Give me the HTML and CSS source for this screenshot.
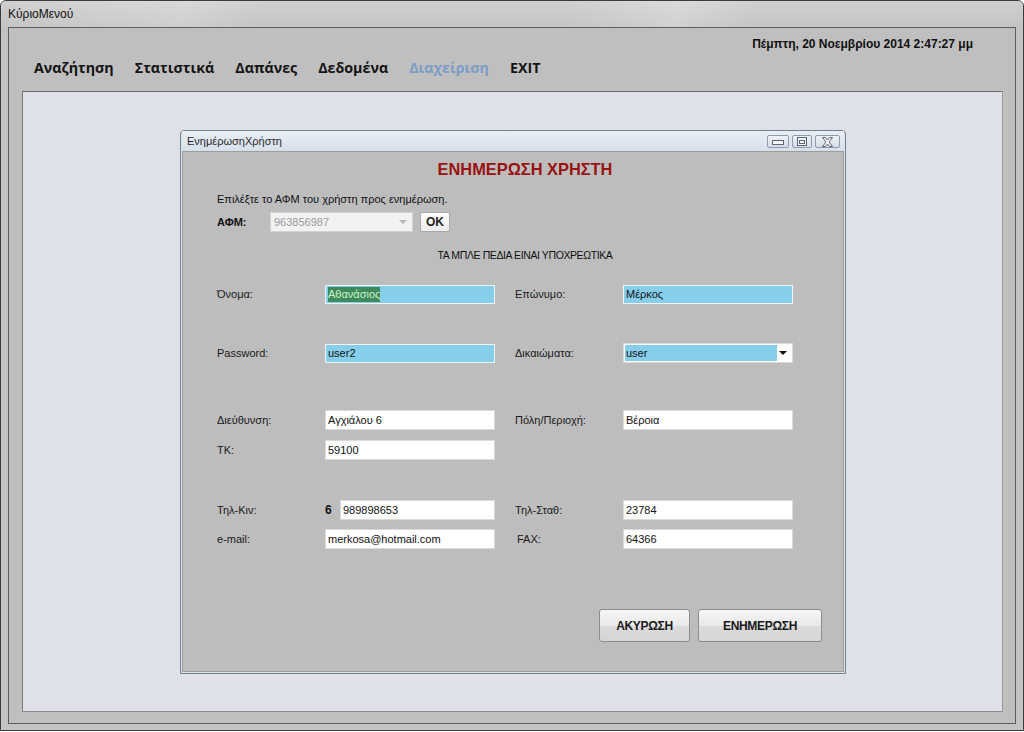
FILE: index.html
```html
<!DOCTYPE html>
<html lang="el">
<head>
<meta charset="utf-8">
<title>ΚύριοΜενού</title>
<link rel="stylesheet" href="styles.css">
</head>
<body>
<div class="window">
  <div class="titlebar"><span class="wtitle">ΚύριοΜενού</span></div>
  <div class="client">
    <div class="datebar"><span class="date">Πέμπτη, 20 Νοεμβρίου 2014 2:47:27 μμ</span></div>
    <nav class="menu">
      <span class="mi">Αναζήτηση</span>
      <span class="mi">Στατιστικά</span>
      <span class="mi">Δαπάνες</span>
      <span class="mi">Δεδομένα</span>
      <span class="mi mi-active">Διαχείριση</span>
      <span class="mi">EXIT</span>
    </nav>
    <div class="mdi">
      <div class="dialog">
        <div class="dlg-title">
          <span class="dlg-caption">ΕνημέρωσηΧρήστη</span>
          <div class="ctrls">
            <span class="cb cb-min"><svg width="12" height="7" viewBox="0 0 12 7"><rect x="0.5" y="2.5" width="11" height="4" fill="#f4f6f9" stroke="#5c6672"/></svg></span>
            <span class="cb cb-max"><svg width="10" height="9" viewBox="0 0 10 9"><rect x="0.5" y="0.5" width="9" height="8" fill="#f4f6f9" stroke="#5c6672"/><rect x="2.5" y="3.5" width="5" height="3" fill="none" stroke="#5c6672"/></svg></span>
            <span class="cb cb-close"><svg width="13" height="10" viewBox="0 0 13 10"><path d="M1.5 0.5 L4.5 0.5 L6.5 3 L8.5 0.5 L11.5 0.5 L8 5 L11.5 9.5 L8.5 9.5 L6.5 7 L4.5 9.5 L1.5 9.5 L5 5 Z" fill="#f4f6f9" stroke="#5c6672" stroke-width="1"/></svg></span>
          </div>
        </div>
        <div class="dlg-body">
          <h1 class="heading">ΕΝΗΜΕΡΩΣΗ ΧΡΗΣΤΗ</h1>
          <p class="hint">Επιλέξτε το ΑΦΜ του χρήστη προς ενημέρωση.</p>
          <div class="afm-row">
            <span class="afm-label">ΑΦΜ:</span>
            <div class="combo combo-disabled"><span>963856987</span><span class="arrow-gray"></span></div>
            <span class="btn-ok">OK</span>
          </div>
          <p class="note">ΤΑ ΜΠΛΕ ΠΕΔΙΑ ΕΙΝΑΙ ΥΠΟΧΡΕΩΤΙΚΑ</p>

          <div class="group group-req">
            <span class="lbl">Όνομα:</span>
            <div class="field req"><span class="sel">Αθανάσιος</span></div>
            <span class="lbl">Επώνυμο:</span>
            <div class="field req">Μέρκος</div>

            <span class="lbl">Password:</span>
            <div class="field req">user2</div>
            <span class="lbl">Δικαιώματα:</span>
            <div class="field combo-rights"><span class="rights-val">user</span><span class="arrow-black"></span></div>
          </div>

          <div class="group group-addr">
            <span class="lbl">Διεύθυνση:</span>
            <div class="field">Αγχιάλου 6</div>
            <span class="lbl">Πόλη/Περιοχή:</span>
            <div class="field">Βέροια</div>

            <span class="lbl">ΤΚ:</span>
            <div class="field">59100</div>
          </div>

          <div class="group group-phone">
            <span class="lbl">Τηλ-Κιν:</span>
            <div class="phone"><b class="prefix">6</b><div class="field field-phone">989898653</div></div>
            <span class="lbl">Τηλ-Σταθ:</span>
            <div class="field">23784</div>

            <span class="lbl">e-mail:</span>
            <div class="field">merkosa@hotmail.com</div>
            <span class="lbl lbl-fax">FAX:</span>
            <div class="field">64366</div>
          </div>

          <div class="actions">
            <span class="btn btn-cancel">ΑΚΥΡΩΣΗ</span>
            <span class="btn btn-update">ΕΝΗΜΕΡΩΣΗ</span>
          </div>
        </div>
      </div>
    </div>
  </div>
</div>
</body>
</html>
```

FILE: styles.css
```css
* { box-sizing: border-box; }

html, body {
  margin: 0;
  padding: 0;
  background: #ffffff;
  font-family: "Liberation Sans", Arial, sans-serif;
  font-size: 11px;
  color: #000;
}

.window {
  width: 1024px;
  height: 731px;
  border: 1px solid #3c3c3c;
  border-radius: 6px 6px 0 0;
  background: #c3c3c3;
  display: flex;
  flex-direction: column;
  overflow: hidden;
}

.titlebar {
  height: 26px;
  flex: none;
  padding: 6px 0 0 7px;
  background:
    linear-gradient(100deg, rgba(255,255,255,0) 0%, rgba(255,255,255,0.18) 18%, rgba(255,255,255,0) 26%, rgba(255,255,255,0) 55%, rgba(255,255,255,0.22) 66%, rgba(255,255,255,0) 74%),
    linear-gradient(#d0d0d0, #c4c4c4);
}

.wtitle {
  font-family: "Liberation Sans", Arial, sans-serif;
  font-size: 12px;
  color: #111;
}

.client {
  flex: 1;
  margin: 0 7px 6px 7px;
  border: 1px solid #5e5e5e;
  background: #bfbfbf;
  display: flex;
  flex-direction: column;
  padding: 0 12px 11px 13px;
}

.datebar {
  margin-top: 9px;
  height: 14px;
  display: flex;
  justify-content: flex-end;
  padding-right: 30px;
}

.date {
  font-weight: bold;
  font-size: 12px;
  line-height: 14px;
  color: #111;
}

.menu {
  margin-top: 7px;
  height: 20px;
  display: flex;
  gap: 21px;
  padding-left: 12px;
}

.mi {
  font-family: "Open Sans", "DejaVu Sans", sans-serif;
  font-weight: bold;
  font-size: 14.25px;
  line-height: 20px;
  color: #141414;
}

.mi-active {
  color: #7c9cc6;
}

.mdi {
  margin-top: 13px;
  flex: 1;
  background: #dee1e8;
  border-top: 1px solid #6e6e6e;
  border-left: 1px solid #7a7a7a;
  border-right: 1px solid #9a9a9a;
  border-bottom: 1px solid #8e8e8e;
  padding: 38px 0 0 157px;
}

.dialog {
  width: 666px;
  height: 544px;
  border: 1px solid #75808d;
  border-radius: 4px 4px 0 0;
  background: #dbe3ec;
  padding: 0 1px 1px 1px;
  display: flex;
  flex-direction: column;
}

.dlg-title {
  height: 20px;
  flex: none;
  display: flex;
  align-items: center;
  justify-content: space-between;
  padding: 0 4px 0 5px;
  background: linear-gradient(#e9eef5, #d6e0eb);
}

.dlg-caption {
  font-size: 11px;
  color: #2a2a2a;
}

.ctrls {
  display: flex;
  gap: 3px;
  margin-top: 1px;
}

.cb {
  height: 13px;
  border: 1px solid #8d9cab;
  border-radius: 2px;
  background: linear-gradient(#eef2f7, #d4dde8);
  display: flex;
  align-items: center;
  justify-content: center;
}

.cb-min { width: 22px; }
.cb-max { width: 20px; }
.cb-close { width: 25px; }

.dlg-body {
  flex: 1;
  border: 1px solid #9d9d9d;
  background: #bdbdbd;
  padding: 0 0 0 34px;
  display: flex;
  flex-direction: column;
}

.heading {
  margin: 8px 0 0 -34px;
  font-size: 16.4px;
  line-height: 18px;
  font-weight: bold;
  color: #9a1212;
  text-align: center;
  padding-left: 24px;
}

.hint {
  margin: 14px 0 0 0;
  line-height: 14px;
  color: #111;
}

.afm-row {
  margin-top: 6px;
  height: 20px;
  display: flex;
  align-items: center;
}

.afm-label {
  font-weight: bold;
  width: 53px;
  color: #111;
}

.combo {
  height: 20px;
  display: flex;
  align-items: center;
  justify-content: space-between;
}

.combo-disabled {
  width: 143px;
  background: #f2f2f2;
  border: 1px solid #d2d2d2;
  color: #9b9b9b;
  padding: 0 5px 0 3px;
}

.arrow-gray {
  width: 0;
  height: 0;
  border-left: 4px solid transparent;
  border-right: 4px solid transparent;
  border-top: 4px solid #b6b6b6;
}

.btn-ok {
  margin-left: 7px;
  width: 30px;
  height: 20px;
  border: 1px solid #a9a9a9;
  border-radius: 2px;
  background: linear-gradient(#fdfdfd, #ececec);
  font-weight: bold;
  font-size: 12px;
  display: flex;
  align-items: center;
  justify-content: center;
  color: #222;
}

.note {
  margin: 16px 0 0 -34px;
  padding-left: 24px;
  line-height: 14px;
  text-align: center;
  font-size: 10.5px;
  letter-spacing: -0.4px;
  color: #111;
}

.group {
  display: grid;
  grid-template-columns: 108px 170px 20px 108px 170px;
  grid-auto-rows: 20px;
  align-items: center;
}

.group .lbl:nth-child(4n+3) { grid-column: 4; }

.group-req { margin-top: 22px; row-gap: 39px; }
.group-addr { margin-top: 47px; row-gap: 10px; }
.group-phone { margin-top: 40px; row-gap: 9px; }

.lbl {
  color: #1a1a1a;
  font-size: 11px;
}

.lbl-fax { padding-left: 2px; }

.field {
  height: 20px;
  background: #ffffff;
  border: 1px solid #dadada;
  padding: 0 2px;
  display: flex;
  align-items: center;
  white-space: nowrap;
  overflow: hidden;
  color: #111;
}

.field.req {
  height: 19px;
  background: #87ceeb;
  border: 1px solid #eef4f7;
}

.sel {
  background: #3e8a5d;
  color: #cdf3cc;
  line-height: 15px;
}

.combo-rights {
  padding: 1px 5px 1px 1px;
  justify-content: space-between;
}

.rights-val {
  flex: none;
  width: 152px;
  height: 16px;
  background: #87ceeb;
  line-height: 16px;
  padding-left: 1px;
}

.arrow-black {
  width: 0;
  height: 0;
  border-left: 4px solid transparent;
  border-right: 4px solid transparent;
  border-top: 4px solid #111;
}

.phone {
  display: flex;
  align-items: center;
}

.prefix {
  width: 15px;
  font-size: 12px;
  color: #111;
}

.field-phone {
  width: 155px;
}

.actions {
  margin-top: 60px;
  display: flex;
  justify-content: flex-end;
  gap: 8px;
  padding-right: 21px;
}

.btn {
  height: 33px;
  border: 1px solid #8c8c8c;
  border-radius: 3px;
  background: linear-gradient(#f6f6f6 0%, #e9e9e9 50%, #dadada 51%, #d6d6d6 100%);
  font-weight: bold;
  font-size: 12px;
  letter-spacing: -0.3px;
  color: #1a1a1a;
  display: flex;
  align-items: center;
  justify-content: center;
}

.btn-cancel { width: 91px; }
.btn-update { width: 124px; }
```
